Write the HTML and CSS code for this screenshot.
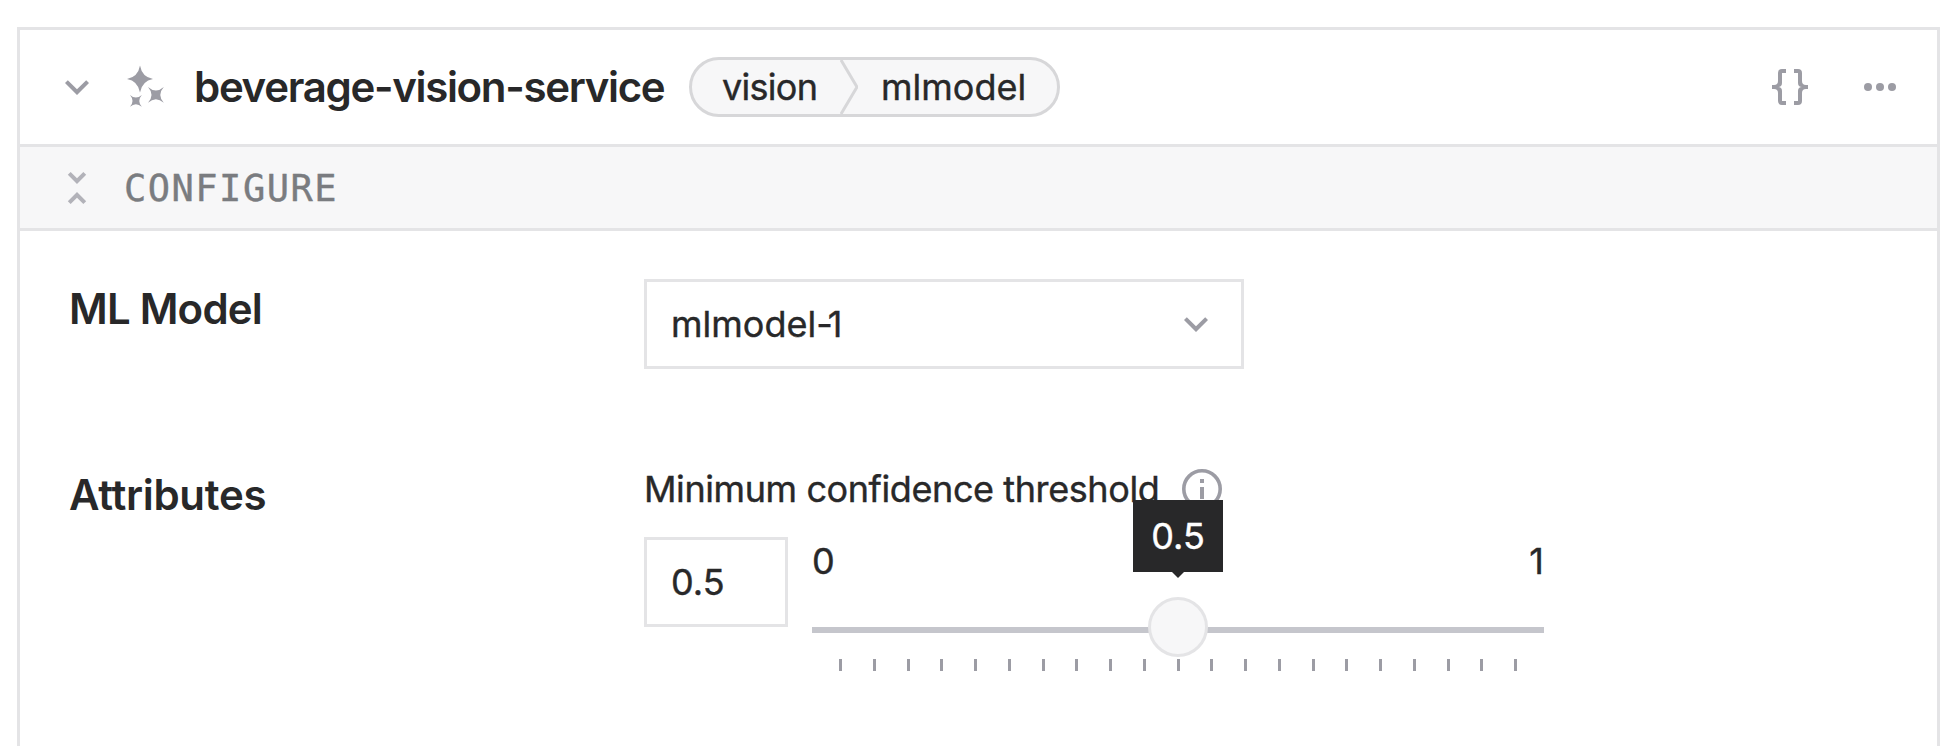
FILE: index.html
```html
<!DOCTYPE html>
<html lang="en">
<head>
<meta charset="utf-8">
<title>beverage-vision-service</title>
<link rel="stylesheet" href="styles.css">
</head>
<body>
<section class="card">
  <header class="card-header">
    <svg class="icon" viewBox="0 0 24 24"><path d="M7.41 8.58 12 13.17l4.59-4.59L18 10l-6 6-6-6z"/></svg>
    <svg class="icon icon-service" viewBox="0 0 48 48">
      <path d="M21 2.500Q23 14 34 16 23 18 21 29.500 19 18 8 16 19 14 21 2.500z"/>
      <path d="M29 24Q36.900 31 44.800 24 37.800 31.900 44.800 39.800 36.900 32.800 29 39.800 36 31.900 29 24z"/>
      <path d="M11 32Q16.900 37 22.800 32 17.800 37.900 22.800 43.800 16.900 38.800 11 43.800 16 37.900 11 32z"/>
    </svg>
    <h1 class="title">beverage-vision-service</h1>
    <div class="pill">
      <span class="pill-type">vision</span>
      <svg class="pill-divider" viewBox="0 0 18 54"><path d="M1 0l16 27L1 54"/></svg>
      <span class="pill-model">mlmodel</span>
    </div>
    <div class="actions">
      <svg class="icon" viewBox="0 0 24 24"><path d="M8 3a2 2 0 0 0-2 2v4a2 2 0 0 1-2 2H3v2h1a2 2 0 0 1 2 2v4a2 2 0 0 0 2 2h2v-2H8v-5a2 2 0 0 0-2-2 2 2 0 0 0 2-2V5h2V3m6 0a2 2 0 0 1 2 2v4a2 2 0 0 0 2 2h1v2h-1a2 2 0 0 0-2 2v4a2 2 0 0 1-2 2h-2v-2h2v-5a2 2 0 0 1 2-2 2 2 0 0 1-2-2V5h-2V3z"/></svg>
      <svg class="icon" viewBox="0 0 24 24"><circle cx="6" cy="12" r="2"/><circle cx="12" cy="12" r="2"/><circle cx="18" cy="12" r="2"/></svg>
    </div>
  </header>
  <div class="section-bar">
    <svg class="icon icon-collapse" viewBox="0 0 24 24"><path d="M16.590 5.410 15.170 4 12 7.170 8.830 4 7.410 5.410 12 10M7.410 18.590 8.830 20 12 16.830 15.170 20l1.410-1.410L12 14z"/></svg>
    <span class="section-name">CONFIGURE</span>
  </div>
  <div class="row row-model">
    <h2 class="row-label label-model">ML Model</h2>
    <div class="select">
      <span class="select-value">mlmodel<span class="select-suffix">-1</span></span>
      <svg class="icon" viewBox="0 0 24 24"><path d="M7.410 8.580 12 13.170l4.590-4.590L18 10l-6 6-6-6z"/></svg>
    </div>
  </div>
  <div class="row row-attributes">
    <h2 class="row-label">Attributes</h2>
    <div class="field">
      <div class="field-label"><span class="field-name">Minimum confidence threshold</span>
        <svg class="info" viewBox="0 0 40 40"><circle cx="20" cy="20" r="18.200"/><path d="M18 10h4v4h-4zM18 18h4v12h-4z"/></svg>
      </div>
      <div class="controls">
        <div class="number">0.5</div>
        <div class="slider">
          <div class="bounds"><span>0</span><span>1</span></div>
          <div class="track">
            <div class="handle"><div class="tooltip">0.5</div></div>
          </div>
          <svg class="ticks" viewBox="0 0 678 12" shape-rendering="crispEdges"><path d="M1.500 0v12M35.500 0v12M69.500 0v12M102.500 0v12M136.500 0v12M170.500 0v12M204.500 0v12M237.500 0v12M271.500 0v12M305.500 0v12M339.500 0v12M372.500 0v12M406.500 0v12M440.500 0v12M474.500 0v12M507.500 0v12M541.500 0v12M575.500 0v12M609.500 0v12M642.500 0v12M676.500 0v12"/></svg>
        </div>
      </div>
    </div>
  </div>
</section>
</body>
</html>
```

FILE: styles.css
```css
* { box-sizing: border-box; }
body {
  margin: 0;
  height: 746px;
  overflow: hidden;
  padding: 27px 6px 0 17px;
  background: #fff;
  color: #282829;
  font: 400 36px/48px Inter, "Liberation Sans", sans-serif;
  -webkit-text-stroke: .4px currentColor;
}
h1, h2 { margin: 0; -webkit-text-stroke: 0; }
svg { display: block; flex: none; }
.card { height: 719px; border: 3px solid #e4e4e6; border-bottom: 0; }
.icon { width: 48px; height: 48px; fill: #9c9ca4; }
.card-header {
  display: flex;
  align-items: center;
  height: 117px;
  padding: 0 33px;
  border-bottom: 3px solid #e4e4e6;
}
.icon-service { margin-left: 18px; }
.title {
  margin-left: 27px;
  width: 495px;
  font-size: 42px;
  font-weight: 600;
  letter-spacing: -1.320px;
  white-space: nowrap;
}
.pill {
  display: flex;
  align-items: center;
  width: 371px;
  height: 60px;
  border: 3px solid #d7d7d9;
  border-radius: 30px;
  background: #f7f7f8;
}
.pill-type { margin-left: 30px; width: 118px; letter-spacing: -.700px; }
.pill-divider { width: 18px; height: 54px; fill: none; stroke: #d7d7d9; stroke-width: 3; }
.pill-model { margin-left: 23px; }
.actions { display: flex; gap: 42px; margin-left: auto; }
.section-bar {
  display: flex;
  align-items: center;
  height: 84px;
  padding: 0 33px;
  border-bottom: 3px solid #e4e4e6;
  background: #f7f7f8;
}
.icon-collapse { opacity: .75; }
.section-name {
  margin-left: 23px;
  padding-top: 2px;
  color: #7a7c80;
  font: 400 37px/48px "DejaVu Sans Mono", monospace;
  letter-spacing: 1.500px;
}
.row { display: flex; padding-left: 49px; }
.row-model { padding-top: 48px; }
.row-attributes { padding-top: 96px; }
.row-label { width: 575px; font-size: 42px; line-height: 60px; font-weight: 600; letter-spacing: -.300px; }
.label-model { letter-spacing: -.800px; }
.select {
  display: flex;
  align-items: center;
  justify-content: space-between;
  width: 600px;
  height: 90px;
  padding: 0 21px 0 24px;
  border: 3px solid #e4e4e6;
}
.select-suffix { letter-spacing: -5px; }
.field-label { display: flex; align-items: center; gap: 22px; height: 48px; }
.field-name { width: 516px; letter-spacing: -.410px; white-space: nowrap; }
.info { width: 40px; height: 40px; fill: #9c9ca4; }
.info circle { fill: none; stroke: #9c9ca4; stroke-width: 3.600; }
.controls { display: flex; gap: 24px; margin-top: 24px; }
.number { width: 144px; height: 90px; padding: 18px 24px; border: 3px solid #e4e4e6; }
.slider { width: 732px; }
.bounds { display: flex; justify-content: space-between; }
.track { position: relative; height: 6px; margin-top: 42px; background: #c5c6cc; }
.handle {
  position: absolute;
  left: 336px;
  top: -30px;
  width: 60px;
  height: 60px;
  border: 3px solid #e4e4e6;
  border-radius: 50%;
  background: #f7f7f8;
}
.tooltip {
  position: absolute;
  left: -18px;
  top: -100px;
  width: 90px;
  height: 72px;
  background: #282829;
  color: #fff;
  line-height: 72px;
  text-align: center;
}
.tooltip::after {
  content: "";
  position: absolute;
  left: 39px;
  top: 72px;
  border: 6px solid transparent;
  border-top-color: #282829;
  border-bottom: 0;
}
.ticks { width: 678px; height: 12px; margin: 26px 0 0 27px; stroke: #9c9ca4; stroke-width: 3; }
```
